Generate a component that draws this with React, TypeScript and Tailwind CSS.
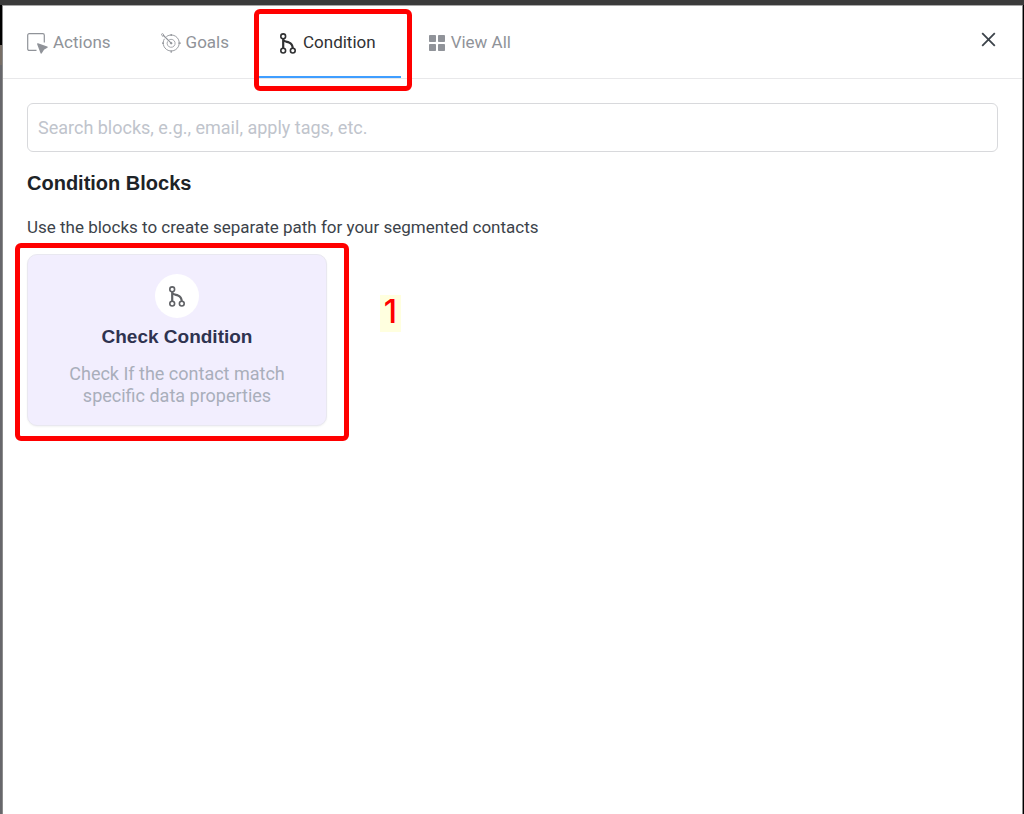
import React, { useState } from 'react';

interface IconProps {
  className?: string;
}

interface Tab {
  key: string;
  label: string;
  icon: React.FC<IconProps>;
}

interface Block {
  title: string;
  description: string;
}

const ActionsIcon: React.FC<IconProps> = ({ className }) => (
  <svg width="21" height="21" viewBox="0 0 21 21" fill="none" aria-hidden="true" className={className}>
    <path
      d="M9.5 17.4H2.2A1.5 1.5 0 0 1 .7 15.9V2.2A1.5 1.5 0 0 1 2.2.7h13.6a1.5 1.5 0 0 1 1.5 1.5v7.3"
      stroke="currentColor"
      strokeWidth="1.2"
    />
    <path
      d="M10.8 11 20 14.2l-3.4 1.9-2.4 3.9z"
      fill="currentColor"
      stroke="currentColor"
      strokeWidth="1.4"
      strokeLinejoin="round"
    />
  </svg>
);

const GoalsIcon: React.FC<IconProps> = ({ className }) => (
  <svg width="20" height="20" viewBox="0 0 20 20" fill="none" stroke="currentColor" aria-hidden="true" className={className}>
    <path d="M5.4 3.6A8 8 0 1 1 3.4 5.8" strokeWidth="0.9" />
    <path d="M8.2 6.8a4 4 0 1 1-1.6 1.6" strokeWidth="0.8" />
    <path d="M2 2l8.2 8.2" strokeWidth="1.1" />
    <path d="M.4 1.2 1.8.6l1.2 1.6-1.4 1.2z" strokeWidth="0.8" />
    <path d="M10.2.9v2M10.2 17.4v2.4M17.4 10.2h2.4M1 10.2h2" strokeWidth="1.2" />
    <circle cx="10.2" cy="10.2" r="0.9" fill="currentColor" strokeWidth="0.6" />
  </svg>
);

const BranchIcon: React.FC<IconProps> = ({ className }) => (
  <svg width="19" height="21" viewBox="-1 0 19 21" fill="none" stroke="currentColor" aria-hidden="true" className={className}>
    <circle cx="3.2" cy="3.3" r="2.4" strokeWidth="1.6" />
    <circle cx="3.2" cy="17.6" r="2.4" strokeWidth="1.6" />
    <circle cx="12.8" cy="17.6" r="2.4" strokeWidth="1.6" />
    <path d="M3.2 5.6v9.7M3.2 6.6c1 2.4 3.4 2 5.8 2.9 2.6 1 3.6 3 3.8 5.8" strokeWidth="2.2" />
  </svg>
);

const GridIcon: React.FC<IconProps> = ({ className }) => (
  <svg width="20" height="16" viewBox="0 0 20 16" fill="currentColor" aria-hidden="true" className={className}>
    <rect x="3" y="0" width="7" height="7" rx="0.8" />
    <rect x="12" y="0" width="7" height="7" rx="0.8" />
    <rect x="3" y="9" width="7" height="7" rx="0.8" />
    <rect x="12" y="9" width="7" height="7" rx="0.8" />
  </svg>
);

const tabs: Tab[] = [
  { key: 'actions', label: 'Actions', icon: ActionsIcon },
  { key: 'goals', label: 'Goals', icon: GoalsIcon },
  { key: 'condition', label: 'Condition', icon: BranchIcon },
  { key: 'all', label: 'View All', icon: GridIcon },
];

const blocks: Block[] = [
  {
    title: 'Check Condition',
    description: 'Check If the contact match specific data properties',
  },
];

const App: React.FC = () => {
  const [activeTab, setActiveTab] = useState('condition');
  const [search, setSearch] = useState('');

  return (
    <div className="flex min-h-screen flex-col bg-[#3b3b3b] pt-[5px] font-['Roboto',sans-serif]">
      <div className="flex flex-1">
        {/* Page behind the dialog */}
        <div className="flex w-[3px] shrink-0 flex-col border-r border-[#8c8c8c] bg-[#67676b]">
          <div className="h-10 bg-black" />
          <div className="h-5 bg-[#776e66]" />
        </div>

        <main className="min-w-0 flex-1 border-t border-[#a9a9a9] bg-white">
          <header className="flex h-[73px] items-start justify-between border-b border-[#e8e8ea] pr-[26px]">
            <nav role="tablist" className="-ml-px flex h-[72px]">
              {tabs.map(({ key, label, icon: Icon }) => (
                <button
                  key={key}
                  type="button"
                  role="tab"
                  aria-selected={activeTab === key}
                  onClick={() => setActiveTab(key)}
                  className={`relative flex items-center gap-[5px] border-b-2 px-[25px] pt-1 text-[17px] whitespace-nowrap ${
                    activeTab === key
                      ? 'border-[#409eff] text-[#303133]'
                      : 'border-transparent text-[#909399]'
                  }`}
                >
                  <Icon />
                  {label}
                  {key === 'condition' && (
                    <span className="pointer-events-none absolute top-[3px] -right-[11px] -bottom-[15px] left-0 rounded-md border-5 border-[#ff0000]" />
                  )}
                </button>
              ))}
            </nav>
            <button type="button" aria-label="Close" className="mt-[26px] text-[#3c434a]">
              <svg width="15" height="15" viewBox="0 0 15 15" fill="none" stroke="currentColor" strokeWidth="1.8" aria-hidden="true">
                <path d="M1.2 1.2l12.6 12.6M13.8 1.2 1.2 13.8" />
              </svg>
            </button>
          </header>

          <section className="px-6 pt-6">
            <input
              type="text"
              aria-label="Search blocks"
              placeholder="Search blocks, e.g., email, apply tags, etc."
              value={search}
              onChange={(e) => setSearch(e.target.value)}
              className="block h-[49px] w-full rounded-md border border-[#d8d9dc] px-[10px] text-lg text-[#606266] outline-none placeholder:text-[#c0c4cc]"
            />

            <h2 className="mt-[19px] font-['Liberation_Sans',sans-serif] text-xl leading-6 font-bold text-[#1d2327]">
              Condition Blocks
            </h2>
            <p className="mt-5 text-[17px] leading-6 text-[#3c434a]">
              Use the blocks to create separate path for your segmented contacts
            </p>

            <div className="mt-[15px] flex items-start">
              {blocks.map((block) => (
                <div key={block.title} className="relative">
                  <button
                    type="button"
                    className="flex h-[172px] w-[300px] flex-col items-center rounded-[10px] border border-[#e9e8f0] bg-[#f2eefe] px-8 pt-[19px] shadow-xs"
                  >
                    <span className="flex size-11 items-center justify-center rounded-full bg-white text-[#606266]">
                      <BranchIcon />
                    </span>
                    <span className="mt-[7px] font-['Liberation_Sans',sans-serif] text-[19px] leading-6 font-bold text-[#2f3350]">
                      {block.title}
                    </span>
                    <span className="mt-[14px] text-lg leading-[22px] text-[#a9aebb]">
                      {block.description}
                    </span>
                  </button>
                  <span className="pointer-events-none absolute -top-[11px] -right-[22px] -bottom-[15px] -left-3 rounded-md border-5 border-[#ff0000]" />
                </div>
              ))}
              <span className="mt-[41px] ml-[53px] flex h-[37px] w-[21px] items-center justify-center bg-[#ffffdf] pb-1 font-['Inter',sans-serif] text-[32px] leading-8 font-medium text-[#ff0000]">
                1
              </span>
            </div>
          </section>
        </main>

        <div className="w-[2px] shrink-0 border-l border-[#8c8c8c] bg-black" />
      </div>
    </div>
  );
};

export default App;
